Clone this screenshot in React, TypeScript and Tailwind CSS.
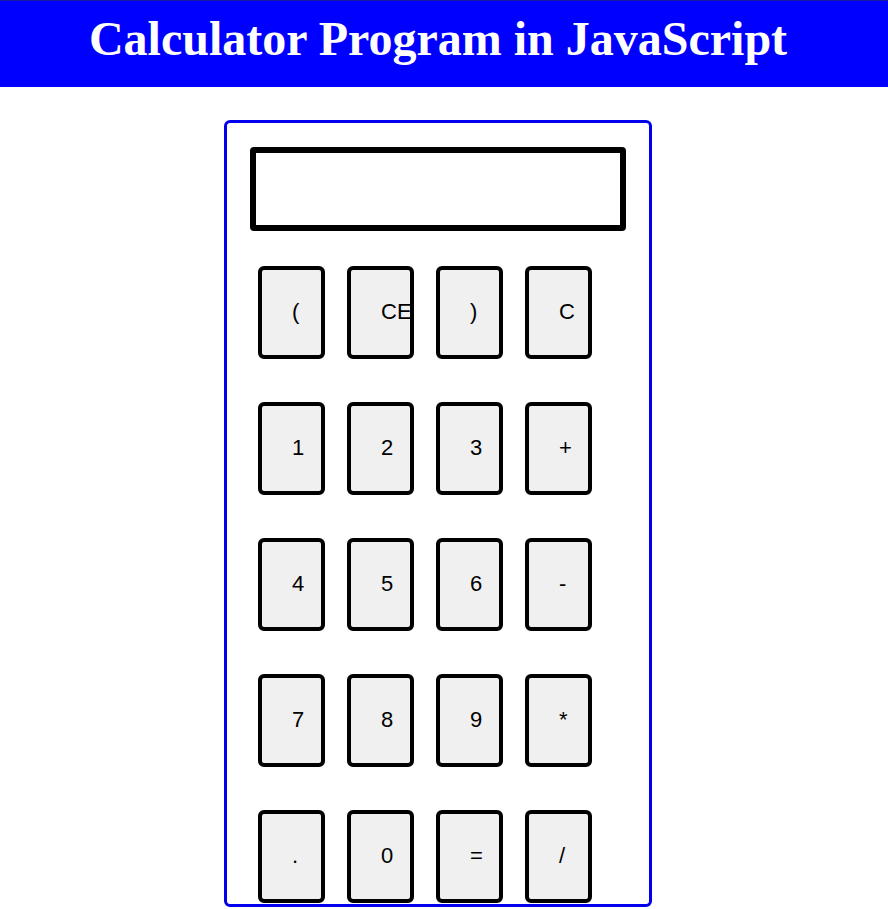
import React from "react";

const rows: string[][] = [
  ["(", "CE", ")", "C"],
  ["1", "2", "3", "+"],
  ["4", "5", "6", "-"],
  ["7", "8", "9", "*"],
  [".", "0", "=", "/"],
];

export default function App() {
  return (
    <div className="min-h-screen bg-white">
      {/* Header */}
      <div className="h-[87px] bg-[#0000ff] border-t border-[#1a1aa0] flex items-center justify-center pr-[12px] pb-[10px]">
        <h1 className="text-[48px] font-bold text-white font-['Liberation_Serif',serif] leading-none">
          Calculator Program in JavaScript
        </h1>
      </div>

      {/* Calculator */}
      <div className="ml-[224px] mt-[33px] w-[428px] h-[787px] border-[3px] border-[#0000ee] rounded-[6px] pt-[24px] pl-[23px] overflow-hidden">
        <div className="w-[376px] h-[84px] border-[6px] border-black rounded-[4px]" />
        <div className="flex flex-col gap-[43px] mt-[35px] pl-[8px]">
          {rows.map((row, i) => (
            <div key={i} className="flex gap-[22px]">
              {row.map((key) => (
                <button
                  key={key}
                  className="w-[67px] h-[93px] border-[4px] border-black rounded-[6px] bg-[#f0f0f0] text-left pl-[30px] pb-[2px] whitespace-nowrap overflow-visible text-[22px] text-black font-['Liberation_Sans',Arial,sans-serif]"
                >
                  {key}
                </button>
              ))}
            </div>
          ))}
        </div>
      </div>
    </div>
  );
}
